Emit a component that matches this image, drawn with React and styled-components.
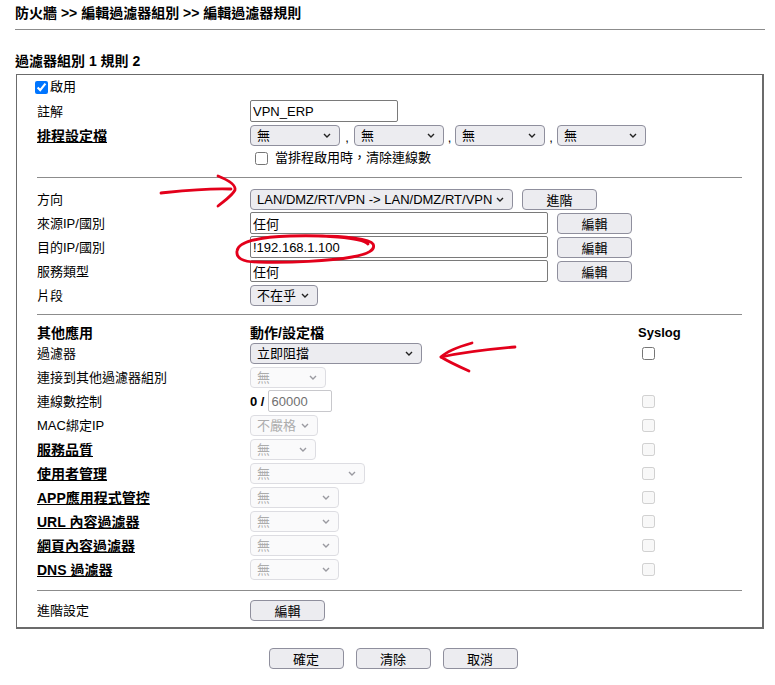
import styled, { createGlobalStyle } from "styled-components";

const GlobalStyle = createGlobalStyle`
  body {
    margin: 0;
    background: #fff;
    color: #000;
    font-family: "Liberation Sans", "Noto Sans CJK TC", sans-serif;
    font-size: 13px;
  }
`;

const Page = styled.div`
  position: relative;
  width: 775px;
  height: 685px;
  box-sizing: border-box;
  padding: 0 10px 0 15px;
`;

const PageTitle = styled.h1`
  margin: 0;
  padding: 4px 0 7px;
  font-size: 14px;
  font-weight: bold;
  line-height: 18px;
  border-bottom: 1px solid #8c8c8c;
`;

const GroupTitle = styled.h2`
  margin: 22px 0 4px;
  font-size: 14px;
  font-weight: bold;
  line-height: 18px;
`;

const RuleBox = styled.div`
  margin: 0 1px;
  border: 1px solid #6b6b6b;
  border-right-width: 2px;
  border-bottom-width: 2px;
  padding: 0 20px 5px;
`;

const Row = styled.div`
  display: grid;
  grid-template-columns: 213px 388px 1fr;
  align-items: center;
  height: ${({ $h }) => $h || 24}px;
`;

const Divider = styled.div`
  border-top: 1px solid #8c8c8c;
  margin: ${({ $top }) => $top}px 0 ${({ $bottom }) => $bottom}px;
`;

const Label = styled.span`
  padding-top: 2px;
  line-height: 16px;
  font-size: ${({ $bold, $small }) => ($bold && !$small ? 14 : 13)}px;
  font-weight: ${({ $bold }) => ($bold ? "bold" : "normal")};
  text-decoration: ${({ $link }) => ($link ? "underline" : "none")};
  white-space: nowrap;
`;

const Cell = styled.div`
  display: flex;
  align-items: center;
  gap: ${({ $gap }) => $gap || 0}px;

  > * {
    flex-shrink: 0;
  }
`;

const CheckLabel = styled.label`
  display: flex;
  align-items: center;
  gap: ${({ $gap }) => $gap}px;
  margin-left: ${({ $offset }) => $offset}px;
  line-height: 16px;
`;

const Check = styled.input.attrs({ type: "checkbox" })`
  width: 13px;
  height: 13px;
  margin: 0;
`;

const SyslogCell = styled.div`
  display: flex;
  padding-left: 4px;
`;

const SelectWrap = styled.span`
  position: relative;
  display: inline-flex;
  width: ${({ $w }) => $w}px;
  height: 21px;
`;

const NativeSelect = styled.select`
  appearance: none;
  width: 100%;
  height: 100%;
  box-sizing: border-box;
  margin: 0;
  padding: 0 20px 0 6px;
  font: inherit;
  font-size: 13px;
  color: #000;
  background: #ececf0;
  border: 1px solid #8f8f9d;
  border-radius: 4px;

  &:disabled {
    color: #8a8a8a;
    background: #f8f8fa;
    border-color: #d0d0d6;
  }
`;

const Chevron = styled.svg`
  position: absolute;
  right: 9px;
  top: 8px;
  width: 8px;
  height: 5px;
  pointer-events: none;
`;

const TextInput = styled.input`
  width: ${({ $w }) => $w}px;
  height: 22px;
  box-sizing: border-box;
  margin: 0;
  padding: 0 2px;
  font: inherit;
  font-size: 13px;
  color: #000;
  background: #fff;
  border: 1px solid #7a7a7a;
  border-radius: 2px;

  &:disabled {
    color: #707070;
    border-color: #c8c8cc;
  }
`;

const Btn = styled.button`
  width: 75px;
  height: 21px;
  box-sizing: border-box;
  margin: 0;
  padding: 0;
  font: inherit;
  font-size: 13px;
  color: #000;
  background: #ececf0;
  border: 1px solid #8f8f9d;
  border-radius: 4px;
`;

const Sep = styled.span`
  width: ${({ $w }) => $w}px;
  text-align: center;
  align-self: flex-end;
  line-height: 16px;
`;

const Prefix = styled.span`
  margin-right: 4px;
  font-weight: bold;
`;

const Actions = styled.div`
  display: flex;
  justify-content: center;
  gap: 12px;
  margin-top: 19px;
  padding-left: 6px;
`;

const Marks = styled.svg`
  position: absolute;
  left: 0;
  top: 0;
  width: 775px;
  height: 685px;
  pointer-events: none;
`;

const Select = ({ w, value, disabled }) => (
  <SelectWrap $w={w}>
    <NativeSelect disabled={disabled} defaultValue={value}>
      <option>{value}</option>
    </NativeSelect>
    <Chevron viewBox="0 0 8 5">
      <path
        d="M1 1 L4 4 L7 1"
        fill="none"
        stroke={disabled ? "#9a9aa0" : "#222"}
        strokeWidth="1.4"
      />
    </Chevron>
  </SelectWrap>
);

const apps = [
  { label: "過濾器", w: 172, value: "立即阻擋", syslog: "on" },
  { label: "連接到其他過濾器組別", w: 76, value: "無", disabled: true },
  { label: "連線數控制", limit: true, syslog: "off" },
  { label: "MAC綁定IP", w: 68, value: "不嚴格", disabled: true, syslog: "off" },
  { label: "服務品質", link: true, w: 66, value: "無", disabled: true, syslog: "off" },
  { label: "使用者管理", link: true, w: 115, value: "無", disabled: true, syslog: "off" },
  { label: "APP應用程式管控", link: true, w: 89, value: "無", disabled: true, syslog: "off" },
  { label: "URL 內容過濾器", link: true, w: 89, value: "無", disabled: true, syslog: "off" },
  { label: "網頁內容過濾器", link: true, w: 89, value: "無", disabled: true, syslog: "off" },
  { label: "DNS 過濾器", link: true, w: 89, value: "無", disabled: true, syslog: "off" },
];

const addressRows = [
  { label: "來源IP/國別", value: "任何" },
  { label: "目的IP/國別", value: "!192.168.1.100" },
  { label: "服務類型", value: "任何" },
];

export default function App() {
  return (
    <Page>
      <GlobalStyle />
      <PageTitle>防火牆 &gt;&gt; 編輯過濾器組別 &gt;&gt; 編輯過濾器規則</PageTitle>
      <GroupTitle>過濾器組別 1 規則 2</GroupTitle>

      <RuleBox>
        <Row>
          <CheckLabel $gap={2} $offset={-2}>
            <Check defaultChecked />
            啟用
          </CheckLabel>
        </Row>
        <Row>
          <Label>註解</Label>
          <Cell>
            <TextInput $w={148} defaultValue="VPN_ERP" />
          </Cell>
        </Row>
        <Row>
          <Label $bold $link>排程設定檔</Label>
          <Cell>
            <Select w={90} value="無" />
            <Sep $w={14}>,</Sep>
            <Select w={90} value="無" />
            <Sep $w={11}>,</Sep>
            <Select w={90} value="無" />
            <Sep $w={12}>,</Sep>
            <Select w={89} value="無" />
          </Cell>
        </Row>
        <Row $h={22}>
          <span />
          <Cell>
            <CheckLabel $gap={7} $offset={5}>
              <Check />
              當排程啟用時，清除連線數
            </CheckLabel>
          </Cell>
        </Row>

        <Divider $top={8} $bottom={9} />

        <Row>
          <Label>方向</Label>
          <Cell $gap={9}>
            <Select w={263} value="LAN/DMZ/RT/VPN -> LAN/DMZ/RT/VPN" />
            <Btn>進階</Btn>
          </Cell>
        </Row>
        {addressRows.map(({ label, value }) => (
          <Row key={label}>
            <Label>{label}</Label>
            <Cell $gap={9}>
              <TextInput $w={298} defaultValue={value} />
              <Btn>編輯</Btn>
            </Cell>
          </Row>
        ))}
        <Row>
          <Label>片段</Label>
          <Cell>
            <Select w={68} value="不在乎" />
          </Cell>
        </Row>

        <Divider $top={7} $bottom={8} />

        <Row $h={18}>
          <Label $bold>其他應用</Label>
          <Label $bold>動作/設定檔</Label>
          <Label $bold $small>Syslog</Label>
        </Row>
        {apps.map((app) => (
          <Row key={app.label}>
            <Label $bold={app.link} $link={app.link}>
              {app.label}
            </Label>
            <Cell>
              {app.limit ? (
                <>
                  <Prefix>0 /</Prefix>
                  <TextInput $w={64} defaultValue="60000" disabled />
                </>
              ) : (
                <Select w={app.w} value={app.value} disabled={app.disabled} />
              )}
            </Cell>
            <SyslogCell>
              {app.syslog && <Check disabled={app.syslog === "off"} />}
            </SyslogCell>
          </Row>
        ))}

        <Divider $top={9} $bottom={7} />

        <Row>
          <Label>進階設定</Label>
          <Cell>
            <Btn>編輯</Btn>
          </Cell>
        </Row>
      </RuleBox>

      <Actions>
        <Btn>確定</Btn>
        <Btn>清除</Btn>
        <Btn>取消</Btn>
      </Actions>

      <Marks viewBox="0 0 775 685">
        <g fill="none" stroke="#e3001b" strokeWidth="2.8" strokeLinecap="round" strokeLinejoin="round">
          <path d="M161 193 C 180 191, 205 188, 231 189" />
          <path d="M218 176 C 228 180, 236 185, 235 190 C 232 196, 224 201, 218 206" />
          <path d="M368 244 C 362 237, 320 235, 290 236 C 258 237, 238 242, 237 251 C 236 258, 242 262, 258 262 C 290 263, 330 261, 352 257 C 368 254, 376 250, 373 244 C 370 239, 345 236, 318 236" />
          <path d="M515 347 C 492 349, 465 352, 441 357" />
          <path d="M472 343 C 458 347, 446 352, 441 357 C 449 362, 460 367, 469 371" />
        </g>
      </Marks>
    </Page>
  );
}
